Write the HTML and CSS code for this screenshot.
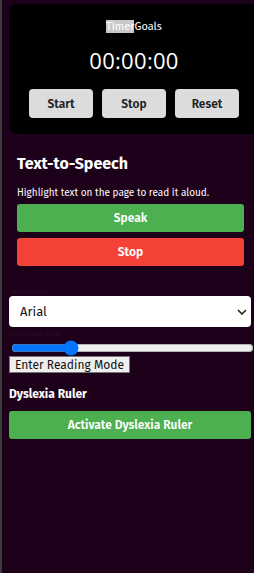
FILE: index.html
```html
<!DOCTYPE html>
<html>
<head>
<meta charset="utf-8">
<link rel="stylesheet" href="styles.css">
</head>
<body>
<div class="sidebar">
  <div class="timer-card">
    <div class="tabs"><span class="tab sel">Timer</span><span class="tab">Goals</span></div>
    <div class="clock">00:00:00</div>
    <div class="timer-btns">
      <button class="tbtn">Start</button>
      <button class="tbtn">Stop</button>
      <button class="tbtn">Reset</button>
    </div>
  </div>
  <section class="tts">
    <h2 class="tts-title">Text-to-Speech</h2>
    <p class="tts-hint">Highlight text on the page to read it aloud.</p>
    <button class="wbtn green">Speak</button>
    <button class="wbtn red">Stop</button>
  </section>
  <label class="dim-label first">Select Font:</label>
  <div class="select">
    <span>Arial</span>
    <svg width="10" height="6" viewBox="0 0 10 6"><path d="M1 1l4 4 4-4" fill="none" stroke="#222" stroke-width="1.6"/></svg>
  </div>
  <label class="dim-label">Font Size: 16px</label>
  <input class="range" type="range" min="0" max="70" value="16">
  <div><button class="reading">Enter Reading Mode</button></div>
  <h3 class="ruler-title">Dyslexia Ruler</h3>
  <button class="wbtn green wide">Activate Dyslexia Ruler</button>
</div>
</body>
</html>
```
FILE: styles.css
```css
html, body {
  margin: 0;
  padding: 0;
  height: 100%;
  background: #1d0019;
  overflow: hidden;
}
body {
  font-family: "Fira Sans", Lato, "Noto Sans", sans-serif;
  color: #fff;
}
.sidebar {
  border-left: 2px solid #3b3b3b;
  min-height: 100%;
  box-sizing: border-box;
  padding: 4px 0 0 7px;
}
.timer-card {
  width: 250px;
  height: 130px;
  background: #000;
  border-radius: 8px;
  box-sizing: border-box;
  padding-top: 16px;
  text-align: center;
}
.tabs {
  font-size: 11px;
  line-height: 13px;
}
.tab.sel {
  background: #c8c8c8;
  color: #fff;
}
.clock {
  margin-top: 14px;
  font-size: 22px;
  line-height: 26px;
  font-family: "Open Sans", sans-serif;
  letter-spacing: 0.3px;
}
.timer-btns {
  display: flex;
  justify-content: center;
  gap: 9px;
  margin-top: 16px;
}
.tbtn {
  width: 64px;
  height: 29px;
  border: none;
  border-radius: 4px;
  background: #dcdcdc;
  color: #222;
  font-family: inherit;
  font-weight: 600;
  font-size: 12px;
  padding: 0;
}
.tts {
  width: 243px;
  box-sizing: border-box;
  padding: 8px;
  margin-top: 12px;
}
.tts-title {
  margin: 0;
  font-size: 16px;
  line-height: 20px;
  font-weight: bold;
}
.tts-hint {
  margin: 13px 0 5px;
  font-size: 10px;
  line-height: 12px;
}
.wbtn {
  display: block;
  width: 100%;
  height: 28px;
  border: none;
  border-radius: 3px;
  color: #fff;
  font-family: inherit;
  font-weight: 600;
  font-size: 12px;
  padding: 0;
}
.wbtn + .wbtn { margin-top: 6px; }
.green { background: #4caf50; }
.red { background: #f44336; }
.dim-label {
  display: block;
  font-size: 8px;
  line-height: 9px;
  color: #2a1027;
}
.dim-label.first { margin-top: 13px; }
.select {
  width: 242px;
  height: 31px;
  box-sizing: border-box;
  background: #fff;
  border-radius: 4px;
  display: flex;
  align-items: center;
  justify-content: space-between;
  padding: 0 4px 0 11px;
  color: #111;
  font-size: 13px;
}
.select + .dim-label { margin-top: 2px; }
.range {
  display: block;
  width: 243px;
  margin: 4px 0 0 2px;
  height: 12px;
  accent-color: #0075ff;
}
.reading {
  font-family: inherit;
  font-size: 12px;
  padding: 1px 5px;
  height: 17px;
  line-height: 14px;
  background: #efefef;
  border: 1px solid #767676;
  border-radius: 0;
  color: #111;
}
.ruler-title {
  margin: 14px 0 10px;
  font-size: 12px;
  line-height: 14px;
}
.wide {
  width: 242px;
}
```
